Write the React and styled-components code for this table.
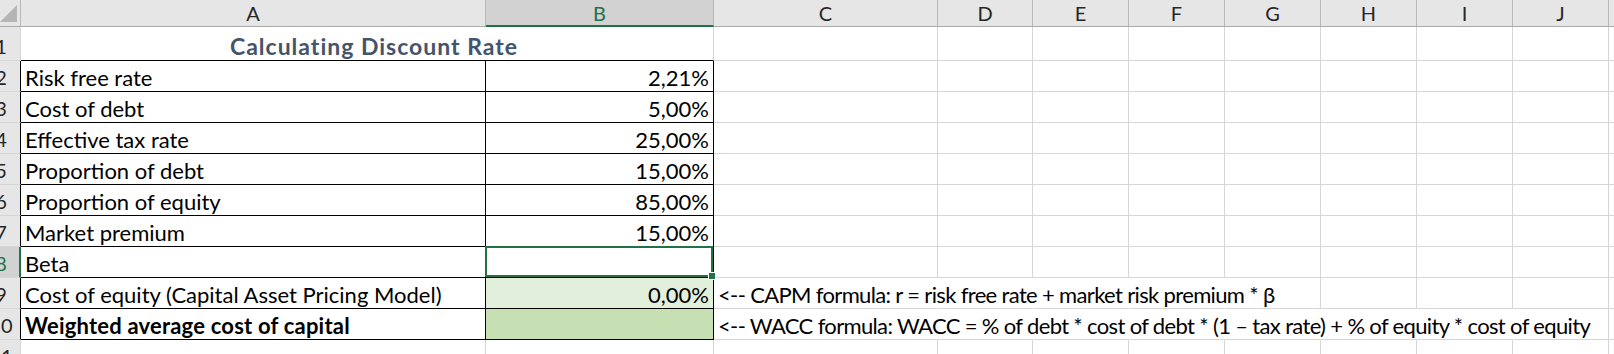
import { createGlobalStyle, styled } from "styled-components";

const GREEN = "#217346";
const GRID = "#d6d6d6";
const HEAD_LINE = "#b8b8b8";

const GlobalStyle = createGlobalStyle`
  html, body { margin: 0; padding: 0; background: #fff; overflow: hidden; }
  body { font-family: Lato, "Liberation Sans", sans-serif; }
`;

const columns = ["A", "B", "C", "D", "E", "F", "G", "H", "I", "J", ""];

const rows = [
  { n: 2, label: "Risk free rate", value: "2,21%" },
  { n: 3, label: "Cost of debt", value: "5,00%" },
  { n: 4, label: "Effective tax rate", value: "25,00%" },
  { n: 5, label: "Proportion of debt", value: "15,00%" },
  { n: 6, label: "Proportion of equity", value: "85,00%" },
  { n: 7, label: "Market premium", value: "15,00%" },
  { n: 8, label: "Beta", value: "", selected: true },
  {
    n: 9,
    label: "Cost of equity (Capital Asset Pricing Model)",
    value: "0,00%",
    fill: "#e2efda",
    note: "<-- CAPM formula: r = risk free rate + market risk premium * β",
    spill: 4,
  },
  {
    n: 10,
    label: "Weighted average cost of capital",
    value: "",
    bold: true,
    fill: "#c6e0b4",
    note: "<-- WACC formula: WACC = % of debt * cost of debt * (1 – tax rate) + % of equity * cost of equity",
    spill: 7,
  },
];

export default function App() {
  // columns after A and B: C..J plus a sliver of K
  const rest = columns.slice(2);

  return (
    <>
      <GlobalStyle />
      <Sheet>
        <Corner>
          <Triangle />
        </Corner>
        {columns.map((c, i) => (
          <ColHead key={i} $active={c === "B"}>{c}</ColHead>
        ))}

        <RowHead $edge={GRID}><RowNum>1</RowNum></RowHead>
        <Title>Calculating Discount Rate</Title>
        {rest.map((c, i) => <Cell key={i} />)}

        {rows.map((r) => (
          <Row key={r.n} r={r} rest={rest} />
        ))}

        <RowHead $edge={GRID}><RowNum>11</RowNum></RowHead>
        <Cell />
        <Cell />
        {rest.map((c, i) => <Cell key={i} />)}
      </Sheet>
    </>
  );
}

const Row = ({ r, rest }) => (
  <>
    <RowHead $edge={r.selected ? GREEN : "#000"} $active={r.selected}>
      <RowNum>{r.n}</RowNum>
    </RowHead>
    <Cell $right="#000" $bottom="#000" $bold={r.bold}>{r.label}</Cell>
    <Cell $right="#000" $bottom="#000" $bg={r.fill} $align="flex-end">
      {r.value}
      {r.selected && (
        <Selection>
          <Handle />
        </Selection>
      )}
    </Cell>
    {rest.map((c, i) => (
      <Cell key={i} $right={r.spill && i < r.spill ? "transparent" : GRID}>
        {i === 0 && r.note ? <Note>{r.note}</Note> : null}
      </Cell>
    ))}
  </>
);

const Sheet = styled.div`
  display: grid;
  grid-template-columns: 21px 465px 228px 224px 95px repeat(6, 96px) 1fr;
  grid-template-rows: 27px 34px repeat(10, 31px);
  width: 100vw;
  height: 354px;
  overflow: hidden;
  color: #000;
  font-size: 22px;
`;

const Corner = styled.div`
  position: relative;
  background: #e6e6e6;
  border-right: 1px solid ${HEAD_LINE};
  border-bottom: 1px solid #ababab;
`;

const Triangle = styled.div`
  position: absolute;
  right: 3px;
  bottom: 4px;
  width: 17px;
  height: 17px;
  background: #b5b5b5;
  clip-path: polygon(100% 0, 100% 100%, 0 100%);
`;

const ColHead = styled.div`
  display: flex;
  align-items: center;
  justify-content: center;
  box-sizing: border-box;
  background: ${(p) => (p.$active ? "#d2d2d2" : "#e6e6e6")};
  color: ${(p) => (p.$active ? GREEN : "#262626")};
  border-right: 1px solid ${HEAD_LINE};
  border-bottom: ${(p) => (p.$active ? `2px solid ${GREEN}` : "1px solid #ababab")};
  font-size: 20px;
  line-height: 20px;
`;

const RowHead = styled.div`
  display: flex;
  align-items: flex-end;
  box-sizing: border-box;
  overflow: hidden;
  padding-bottom: 4px;
  background: ${(p) => (p.$active ? "#d2d2d2" : "#e6e6e6")};
  color: ${(p) => (p.$active ? GREEN : "#262626")};
  border-right: ${(p) => (p.$active ? 2 : 1)}px solid ${(p) => p.$edge};
  border-bottom: 1px solid ${GRID};
`;

const RowNum = styled.span`
  flex: none;
  width: 40px;
  margin-left: -19px;
  text-align: center;
  font-size: 20px;
  line-height: 20px;
`;

const Cell = styled.div`
  position: relative;
  display: flex;
  align-items: flex-end;
  justify-content: ${(p) => p.$align || "flex-start"};
  box-sizing: border-box;
  min-width: 0;
  padding: 0 4px 3px 4px;
  white-space: nowrap;
  line-height: 20px;
  font-weight: ${(p) => (p.$bold ? 700 : 400)};
  letter-spacing: ${(p) => (p.$bold ? "0.2px" : "normal")};
  background: ${(p) => p.$bg || "transparent"};
  border-right: 1px solid ${(p) => p.$right || GRID};
  border-bottom: 1px solid ${(p) => p.$bottom || GRID};
`;

const Title = styled(Cell)`
  grid-column: span 2;
  justify-content: center;
  padding-left: 18px;
  padding-bottom: 4px;
  font-size: 23px;
  font-weight: 700;
  letter-spacing: 1px;
  color: #44546a;
  border-bottom-color: #000;
`;

const Note = styled.span`
  display: block;
  overflow: visible;
  letter-spacing: -0.65px;
`;

const Selection = styled.div`
  position: absolute;
  z-index: 2;
  left: -1px;
  top: -1px;
  width: calc(100% + 1px);
  height: calc(100% + 1px);
  box-sizing: border-box;
  border: 2px solid ${GREEN};
  pointer-events: none;
`;

const Handle = styled.div`
  position: absolute;
  right: -5px;
  bottom: -5px;
  width: 6px;
  height: 6px;
  background: ${GREEN};
  border: 1px solid #fff;
`;
